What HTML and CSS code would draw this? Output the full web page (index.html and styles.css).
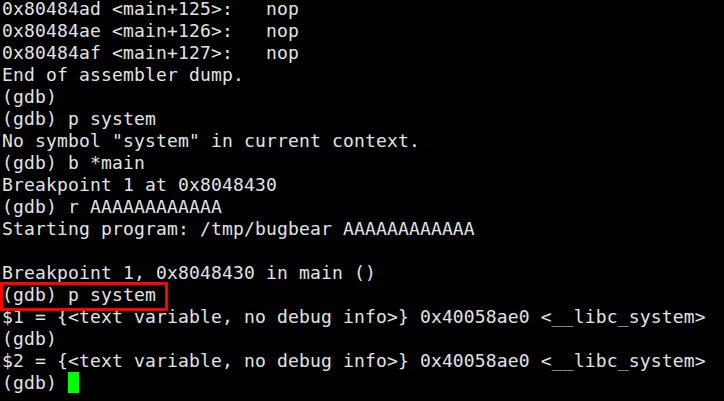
FILE: index.html
```html
<!DOCTYPE html>
<html>
<head>
<meta charset="utf-8">
<link rel="stylesheet" href="styles.css">
</head>
<body>
<pre class="term"><span class="line">0x80484ad &lt;main+125&gt;:   nop</span>
<span class="line">0x80484ae &lt;main+126&gt;:   nop</span>
<span class="line">0x80484af &lt;main+127&gt;:   nop</span>
<span class="line">End of assembler dump.</span>
<span class="line">(gdb)</span>
<span class="line">(gdb) p system</span>
<span class="line">No symbol "system" in current context.</span>
<span class="line">(gdb) b *main</span>
<span class="line">Breakpoint 1 at 0x8048430</span>
<span class="line">(gdb) r AAAAAAAAAAAA</span>
<span class="line">Starting program: /tmp/bugbear AAAAAAAAAAAA</span>
<span class="line"> </span>
<span class="line">Breakpoint 1, 0x8048430 in main ()</span>
<span class="line marked">(gdb) p system<span class="highlight"></span></span>
<span class="line">$1 = {&lt;text variable, no debug info&gt;} 0x40058ae0 &lt;__libc_system&gt;</span>
<span class="line">(gdb)</span>
<span class="line">$2 = {&lt;text variable, no debug info&gt;} 0x40058ae0 &lt;__libc_system&gt;</span>
<span class="line">(gdb) <span class="cursor"></span></span></pre>
</body>
</html>
```

FILE: styles.css
```css
html, body {
  margin: 0;
  padding: 0;
  background: #000;
  width: 724px;
  height: 401px;
  overflow: hidden;
}

.term {
  margin: 0 0 0 2px;
  padding: 0;
  font-family: "DejaVu Sans Mono", monospace;
  font-size: 18px;
  letter-spacing: 0.16px;
  line-height: 18px;
  color: #e3e3e3;
  white-space: normal;
}

.line {
  display: block;
  height: 22px;
  white-space: pre;
}

.marked {
  position: relative;
}

.highlight {
  position: absolute;
  left: -2px;
  top: -4px;
  width: 168px;
  height: 29px;
  box-sizing: border-box;
  border: 3px solid #ff0000;
}

.cursor {
  display: inline-block;
  width: 11px;
  height: 21px;
  margin-top: -2px;
  background: #00ff00;
  vertical-align: top;
}
```
